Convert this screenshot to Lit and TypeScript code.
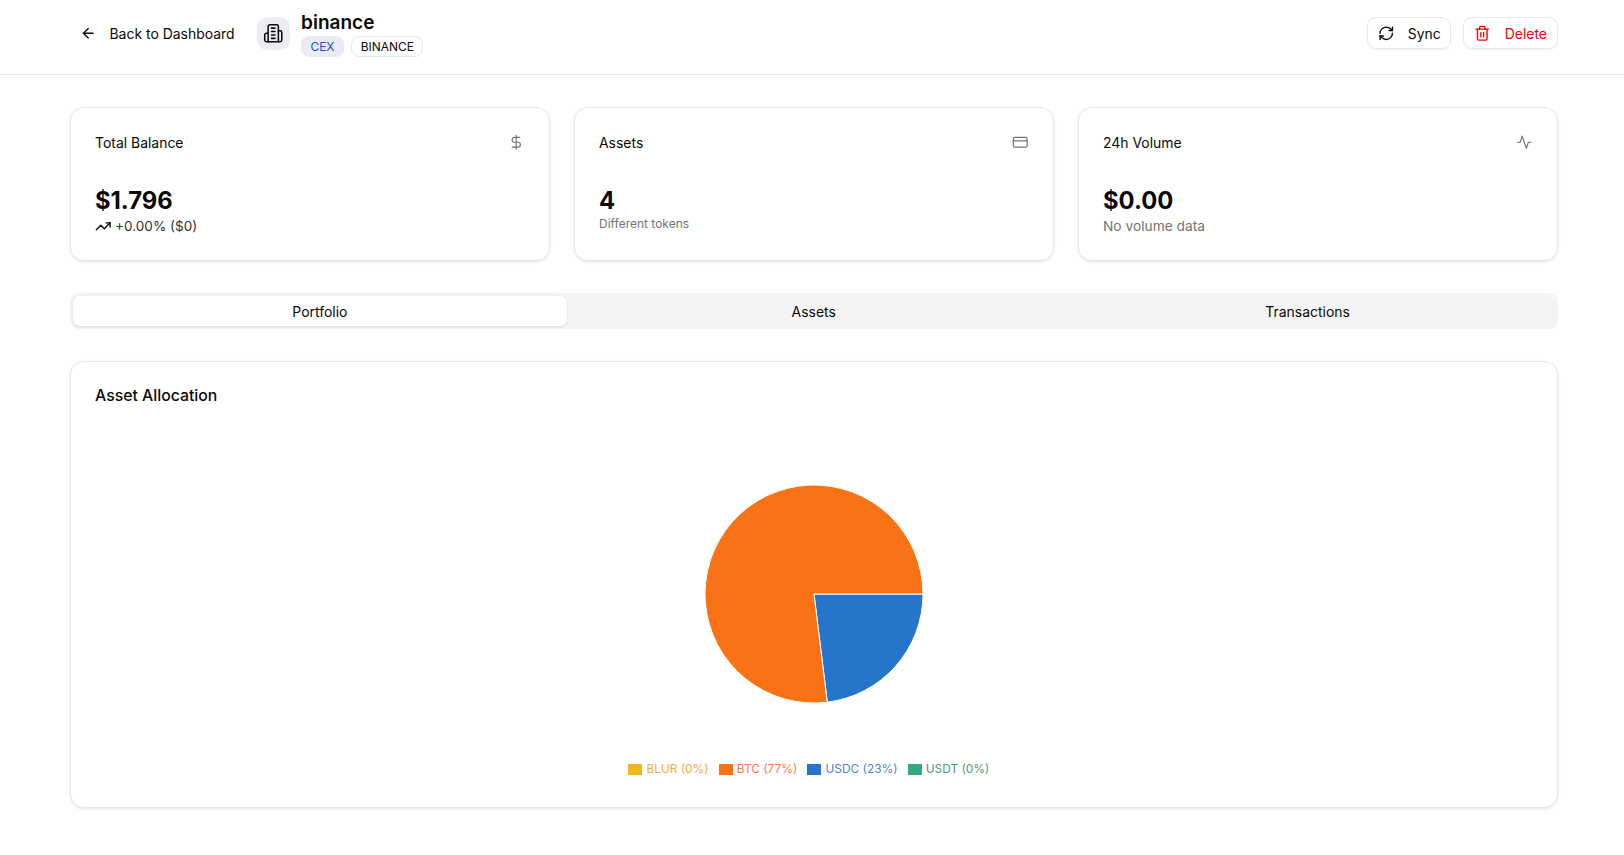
import { LitElement, html, css, svg } from 'lit';
import { customElement } from 'lit/decorators.js';

const icon = (body: unknown, cls = '') =>
  html`<svg class="icon ${cls}" viewBox="0 0 24 24" fill="none" stroke="currentColor" stroke-width="2" stroke-linecap="round" stroke-linejoin="round">${body}</svg>`;

const arrowLeft = svg`<path d="m12 19-7-7 7-7"/><path d="M19 12H5"/>`;
const building = svg`<path d="M6 22V4a2 2 0 0 1 2-2h8a2 2 0 0 1 2 2v18Z"/><path d="M6 12H4a2 2 0 0 0-2 2v6a2 2 0 0 0 2 2h2"/><path d="M18 9h2a2 2 0 0 1 2 2v9a2 2 0 0 1-2 2h-2"/><path d="M10 6h4"/><path d="M10 10h4"/><path d="M10 14h4"/><path d="M10 18h4"/>`;
const refresh = svg`<path d="M3 12a9 9 0 0 1 9-9 9.75 9.75 0 0 1 6.74 2.74L21 8"/><path d="M21 3v5h-5"/><path d="M21 12a9 9 0 0 1-9 9 9.75 9.75 0 0 1-6.74-2.74L3 16"/><path d="M8 16H3v5"/>`;
const trash = svg`<path d="M3 6h18"/><path d="M19 6v14c0 1-1 2-2 2H7c-1 0-2-1-2-2V6"/><path d="M8 6V4c0-1 1-2 2-2h4c1 0 2 1 2 2v2"/><line x1="10" x2="10" y1="11" y2="17"/><line x1="14" x2="14" y1="11" y2="17"/>`;
const dollar = svg`<line x1="12" x2="12" y1="2" y2="22"/><path d="M17 5H9.5a3.5 3.5 0 0 0 0 7h5a3.5 3.5 0 0 1 0 7H6"/>`;
const card = svg`<rect width="20" height="14" x="2" y="5" rx="2"/><line x1="2" x2="22" y1="10" y2="10"/>`;
const activity = svg`<path d="M22 12h-4l-3 9L9 3l-3 9H2"/>`;
const trending = svg`<polyline points="22 7 13.5 15.5 8.5 10.5 2 17"/><polyline points="16 7 22 7 22 13"/>`;

const legend = [
  { name: 'BLUR (0%)', swatch: '#f0b71c', text: '#f5ab3f' },
  { name: 'BTC (77%)', swatch: '#f97316', text: '#f97b4c' },
  { name: 'USDC (23%)', swatch: '#2775ca', text: '#4d86d2' },
  { name: 'USDT (0%)', swatch: '#33a982', text: '#4d9a80' },
];

// point on the pie, clockwise from 3 o'clock
const pt = (deg: number, r: number) => {
  const a = (deg * Math.PI) / 180;
  return `${(110 + r * Math.cos(a)).toFixed(2)} ${(110 + r * Math.sin(a)).toFixed(2)}`;
};

@customElement('app-root')
export class AppRoot extends LitElement {
  static styles = css`
    :host {
      display: block;
      min-height: 855px;
      background: #fff;
      color: #0a0a0a;
      font-family: Inter, 'Liberation Sans', sans-serif;
      font-size: 13.95px;
      font-weight: 420;
    }
    .icon {
      display: block;
      width: 16.5px;
      height: 16.5px;
      flex: none;
    }
    header {
      height: 74.5px;
      box-sizing: border-box;
      border-bottom: 1px solid #e8e8e8;
      padding: 0 66.5px 7.5px 80px;
      display: flex;
      align-items: center;
    }
    .back {
      display: flex;
      align-items: center;
      gap: 13px;
      margin-right: 22px;
    }
    .logo {
      width: 33px;
      height: 33px;
      border-radius: 10px;
      background: #eceef2;
      display: flex;
      align-items: center;
      justify-content: center;
      margin-right: 11.5px;
    }
    .logo .icon {
      width: 20.5px;
      height: 20.5px;
      stroke-width: 1.8;
    }
    .title {
      margin-top: 1px;
    }
    .name {
      font-size: 19px;
      font-weight: 600;
      line-height: 26px;
    }
    .badges {
      display: flex;
      gap: 7.5px;
      margin-top: 0.5px;
    }
    .badge {
      height: 21px;
      box-sizing: border-box;
      padding: 0 8.3px;
      border-radius: 8px;
      border: 1px solid #e8e8e8;
      font-size: 12px;
      display: flex;
      align-items: center;
    }
    .badge.cex {
      background: #e9ecf2;
      border-color: #e9ecf2;
      color: #1d4ed8;
    }
    .spacer {
      flex: 1;
    }
    .btn {
      height: 32px;
      box-sizing: border-box;
      padding: 0 9.5px;
      border: 1px solid #e8e8e8;
      border-radius: 9px;
      background: #fff;
      display: flex;
      align-items: center;
      gap: 13.5px;
      box-shadow: 0 1px 2px rgba(0, 0, 0, 0.05);
    }
    .btn.sync {
      margin-right: 12px;
    }
    .btn.delete {
      color: #f50000;
      padding-left: 10px;
      gap: 14px;
    }
    main {
      padding: 32.5px 66.5px 0 70px;
    }
    .stats {
      display: grid;
      grid-template-columns: repeat(3, 1fr);
      gap: 24.5px;
    }
    .card {
      background: #fff;
      border: 1px solid #e8e8e8;
      border-radius: 14px;
      box-shadow: 0 1px 3px rgba(0, 0, 0, 0.1);
    }
    .stat {
      height: 154px;
      box-sizing: border-box;
      padding: 24px;
    }
    .stat-top {
      display: flex;
      justify-content: space-between;
      align-items: center;
      height: 20px;
      margin-bottom: 33.5px;
    }
    .stat-top .icon {
      color: #737373;
      stroke-width: 1.7;
    }
    .value {
      font-size: 23.8px;
      font-weight: 700;
      line-height: 30.5px;
    }
    .sub {
      color: #737373;
      font-size: 13.75px;
      font-weight: 400;
      line-height: 20px;
    }
    .sub.small {
      font-size: 12px;
      line-height: 16px;
    }
    .sub.trend {
      display: flex;
      align-items: center;
      gap: 3.5px;
      font-size: 13.6px;
      color: #333;
    }
    .sub.trend .icon {
      color: #0a0a0a;
    }
    .tabs {
      margin-top: 32px;
      height: 36px;
      box-sizing: border-box;
      padding: 3px;
      border-radius: 9px;
      background: #f4f4f4;
      display: grid;
      grid-template-columns: repeat(3, 1fr);
    }
    .tab {
      display: flex;
      align-items: center;
      justify-content: center;
      border-radius: 7px;
      padding-top: 1px;
    }
    .tab.active {
      background: #fff;
      box-shadow: 0 1px 3px rgba(0, 0, 0, 0.1);
    }
    .chart {
      margin-top: 32px;
      height: 447px;
      box-sizing: border-box;
      padding: 23.5px 24px;
    }
    .chart h2 {
      margin: 0;
      font-size: 15.8px;
      font-weight: 550;
      line-height: 20px;
    }
    .pie {
      display: block;
      width: 220px;
      height: 220px;
      margin: 78.5px auto 0;
    }
    .legend {
      display: flex;
      justify-content: center;
      gap: 10px;
      margin: 57px 10px 0 0;
      font-size: 11.9px;
      font-weight: 400;
      line-height: 16px;
    }
    .legend-item {
      display: flex;
      align-items: center;
      gap: 4.2px;
    }
    .swatch {
      width: 14px;
      height: 11px;
    }
  `;

  render() {
    return html`
      <header>
        <div class="back">${icon(arrowLeft)}<span>Back to Dashboard</span></div>
        <div class="logo">${icon(building)}</div>
        <div class="title">
          <div class="name">binance</div>
          <div class="badges">
            <span class="badge cex">CEX</span>
            <span class="badge">BINANCE</span>
          </div>
        </div>
        <div class="spacer"></div>
        <div class="btn sync">${icon(refresh)}<span>Sync</span></div>
        <div class="btn delete">${icon(trash)}<span>Delete</span></div>
      </header>
      <main>
        <div class="stats">
          <div class="card stat">
            <div class="stat-top"><span>Total Balance</span>${icon(dollar)}</div>
            <div class="value">$1.796</div>
            <div class="sub trend">${icon(trending)}<span>+0.00% ($0)</span></div>
          </div>
          <div class="card stat">
            <div class="stat-top"><span>Assets</span>${icon(card)}</div>
            <div class="value">4</div>
            <div class="sub small">Different tokens</div>
          </div>
          <div class="card stat">
            <div class="stat-top"><span>24h Volume</span>${icon(activity)}</div>
            <div class="value">$0.00</div>
            <div class="sub">No volume data</div>
          </div>
        </div>
        <div class="tabs">
          <div class="tab active">Portfolio</div>
          <div class="tab">Assets</div>
          <div class="tab">Transactions</div>
        </div>
        <div class="card chart">
          <h2>Asset Allocation</h2>
          <svg class="pie" viewBox="0 0 220 220">
            <path d="M110 110 L${pt(0, 109)} A109 109 0 0 1 ${pt(83, 109)} Z" fill="#2775ca" stroke="#fff" stroke-width="1"></path>
            <path d="M110 110 L${pt(83, 109)} A109 109 0 1 1 ${pt(360, 109)} Z" fill="#f97316" stroke="#fff" stroke-width="1"></path>
          </svg>
          <div class="legend">
            ${legend.map(
              (l) => html`<div class="legend-item" style="color:${l.text}">
                <span class="swatch" style="background:${l.swatch}"></span><span>${l.name}</span>
              </div>`
            )}
          </div>
        </div>
      </main>
    `;
  }
}
